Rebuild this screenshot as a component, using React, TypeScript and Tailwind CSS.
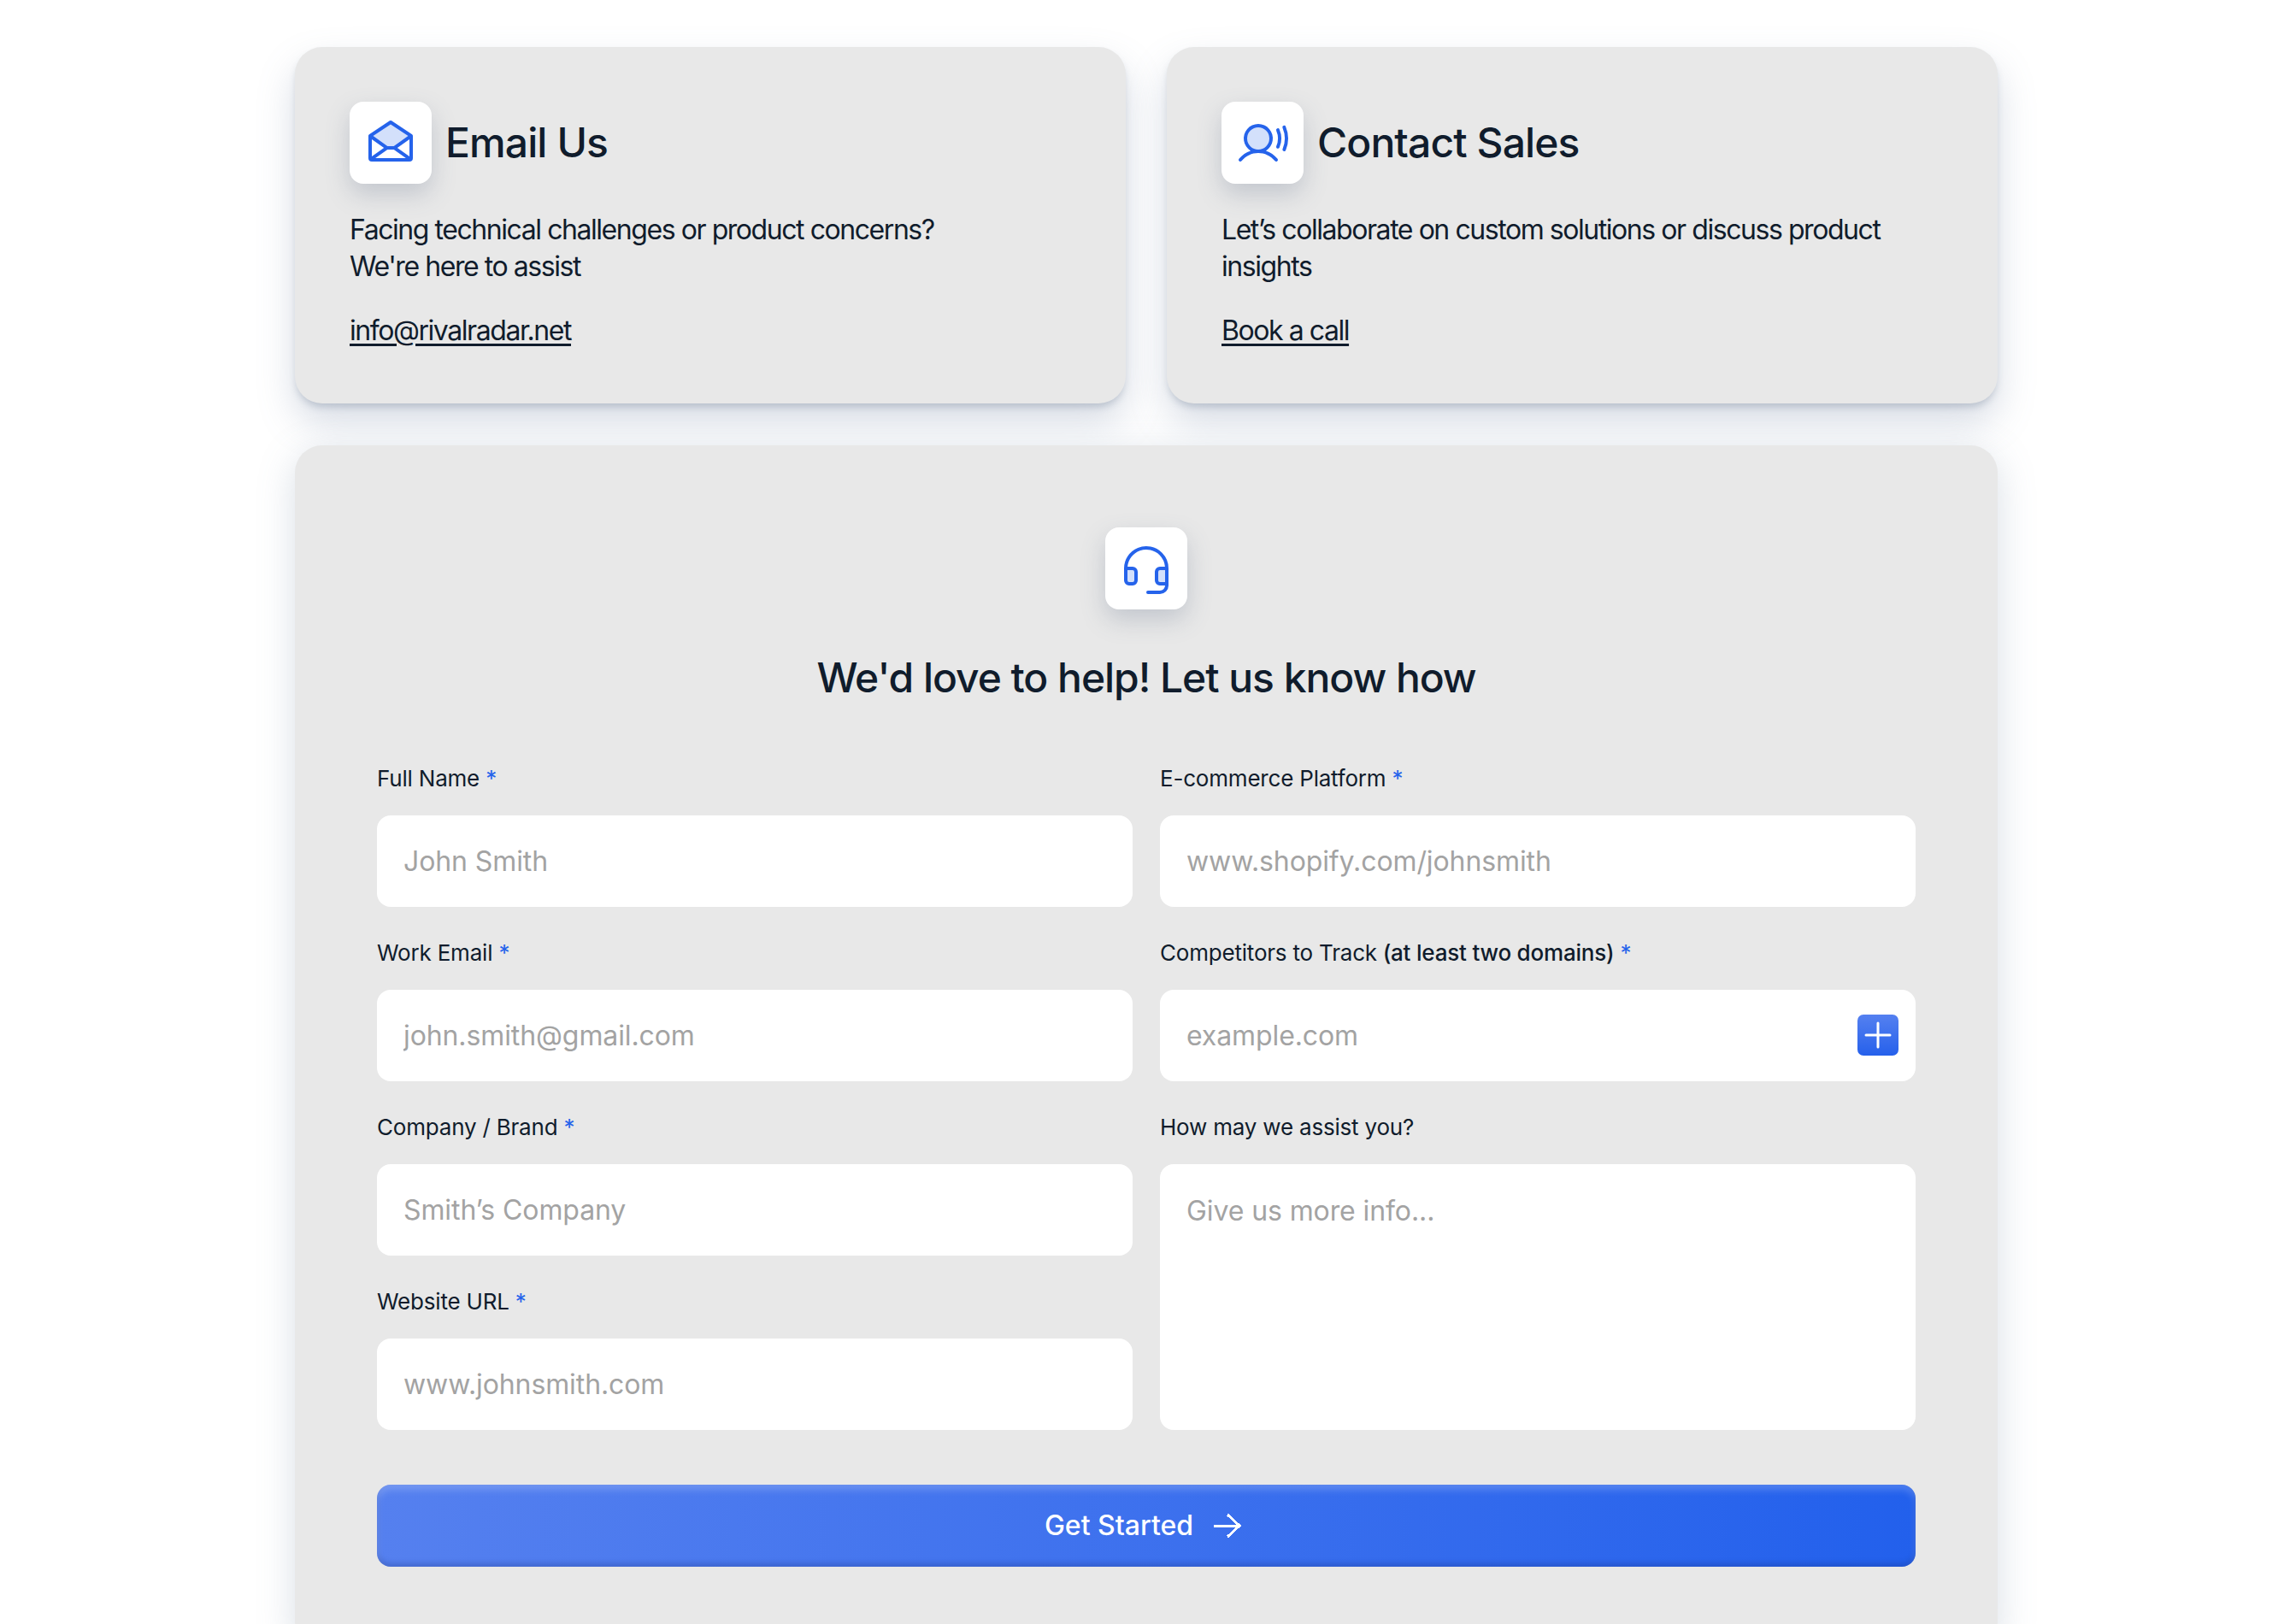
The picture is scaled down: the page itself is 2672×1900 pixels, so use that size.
import { Plus } from "lucide-react";
import { PiEnvelopeOpenDuotone, PiHeadsetDuotone, PiUserSoundDuotone } from "react-icons/pi";

function IconBox({ children }: any) {
  return (
    <div className="flex size-[96px] shrink-0 items-center justify-center rounded-[16px] bg-white text-[#2563eb] shadow-[0_12px_28px_rgba(90,105,130,0.26)]">
      {children}
    </div>
  );
}

function InfoCard({ icon, title, lines, link }: any) {
  return (
    <div className="flex h-[417px] w-[972px] flex-col rounded-[32px] bg-[#e8e8e8] px-[64px] pt-[64px] shadow-[0_6px_8px_-2px_rgba(100,115,140,0.3),0_22px_44px_rgba(110,130,160,0.28)]">
      <div className="flex items-center gap-[16px]">
        <IconBox>{icon}</IconBox>
        <h2 className="text-[48px] font-medium leading-[58px] tracking-[-0.9px] text-[#101c2c]">{title}</h2>
      </div>
      <p className="mt-[32px] text-[32px] leading-[43px] tracking-[-1.44px] text-[#101c2c]">
        {lines.map((line: string) => (
          <span key={line} className="block">{line}</span>
        ))}
      </p>
      <a href="#" className="mt-[32px] self-start text-[32px] leading-[43px] tracking-[-1.44px] text-[#101c2c] underline underline-offset-[4px]">
        {link}
      </a>
    </div>
  );
}

function Field({ label, note, required, placeholder, button }: any) {
  return (
    <div className="flex flex-col">
      <label className="h-[60px] pt-[1px] text-[26px] leading-[32px] tracking-[-0.2px] text-[#101c2c]">
        {label}
        {note && <span className="font-medium"> {note}</span>}
        {required && <span className="text-[#2563eb]"> *</span>}
      </label>
      <div className="relative">
        <input
          placeholder={placeholder}
          className="h-[107px] w-full rounded-[16px] bg-white px-[31px] pb-[1px] text-[32px] tracking-[-0.1px] text-[#101c2c] outline-none placeholder:text-[#a3a3a3]"
        />
        {button && (
          <button className="absolute right-[20px] top-[29px] flex size-[48px] items-center justify-center rounded-[7px] bg-gradient-to-b from-[#5480f0] to-[#2560eb] text-white">
            <Plus size={48} strokeWidth={1.5} className="shrink-0" />
          </button>
        )}
      </div>
    </div>
  );
}

export default function App() {
  return (
    <div className="h-[1900px] overflow-hidden bg-white pl-[345px] pt-[55px] font-['Inter',sans-serif]">
      <div className="flex w-[1992px] flex-col gap-[49px]">
        <div className="flex gap-[48px]">
          <InfoCard
            icon={<PiEnvelopeOpenDuotone size={64} />}
            title="Email Us"
            lines={["Facing technical challenges or product concerns?", "We're here to assist"]}
            link="info@rivalradar.net"
          />
          <InfoCard
            icon={<PiUserSoundDuotone size={64} />}
            title="Contact Sales"
            lines={["Let’s collaborate on custom solutions or discuss product", "insights"]}
            link="Book a call"
          />
        </div>

        <div className="flex flex-col rounded-[32px] bg-[#e8e8e8] px-[96px] pb-[96px] pt-[96px] shadow-[0_10px_44px_rgba(110,130,160,0.26)]">
          <div className="self-center">
            <IconBox>
              <PiHeadsetDuotone size={64} />
            </IconBox>
          </div>
          <h1 className="mt-[51px] text-center text-[48px] font-medium leading-[58px] tracking-[-1.05px] text-[#101c2c]">
            We'd love to help! Let us know how
          </h1>
          <div className="mt-[72px] grid grid-cols-2 gap-x-[32px]">
            <div className="flex flex-col gap-[37px]">
              <Field label="Full Name" required placeholder="John Smith" />
              <Field label="Work Email" required placeholder="john.smith@gmail.com" />
              <Field label="Company / Brand" required placeholder="Smith’s Company" />
              <Field label="Website URL" required placeholder="www.johnsmith.com" />
            </div>
            <div className="flex flex-col gap-[37px]">
              <Field label="E-commerce Platform" required placeholder="www.shopify.com/johnsmith" />
              <Field label="Competitors to Track" note="(at least two domains)" required placeholder="example.com" button />
              <div className="flex flex-col">
                <label className="h-[60px] pt-[1px] text-[26px] leading-[32px] tracking-[-0.2px] text-[#101c2c]">How may we assist you?</label>
                <textarea
                  placeholder="Give us more info..."
                  className="h-[311px] w-full resize-none rounded-[16px] bg-white px-[31px] pb-[32px] pt-[34px] text-[32px] leading-[42px] tracking-[-0.1px] outline-none placeholder:text-[#a3a3a3]"
                />
              </div>
            </div>
          </div>
          <button className="mt-[64px] flex h-[96px] w-full items-center justify-center gap-[24px] rounded-[16px] bg-gradient-to-r from-[#5580ef] to-[#2260ec] text-[32px] font-medium text-white shadow-[inset_0_6px_8px_rgba(255,255,255,0.2),inset_0_-4px_6px_rgba(20,40,110,0.25)]">
            Get Started
            <svg className="mr-[8px]" width="32" height="28" viewBox="0 0 32 28" fill="none" stroke="currentColor" strokeWidth="3" shapeRendering="crispEdges">
              <path d="M0 14H30M16 1L30 14L16 27" />
            </svg>
          </button>
        </div>
      </div>
    </div>
  );
}
